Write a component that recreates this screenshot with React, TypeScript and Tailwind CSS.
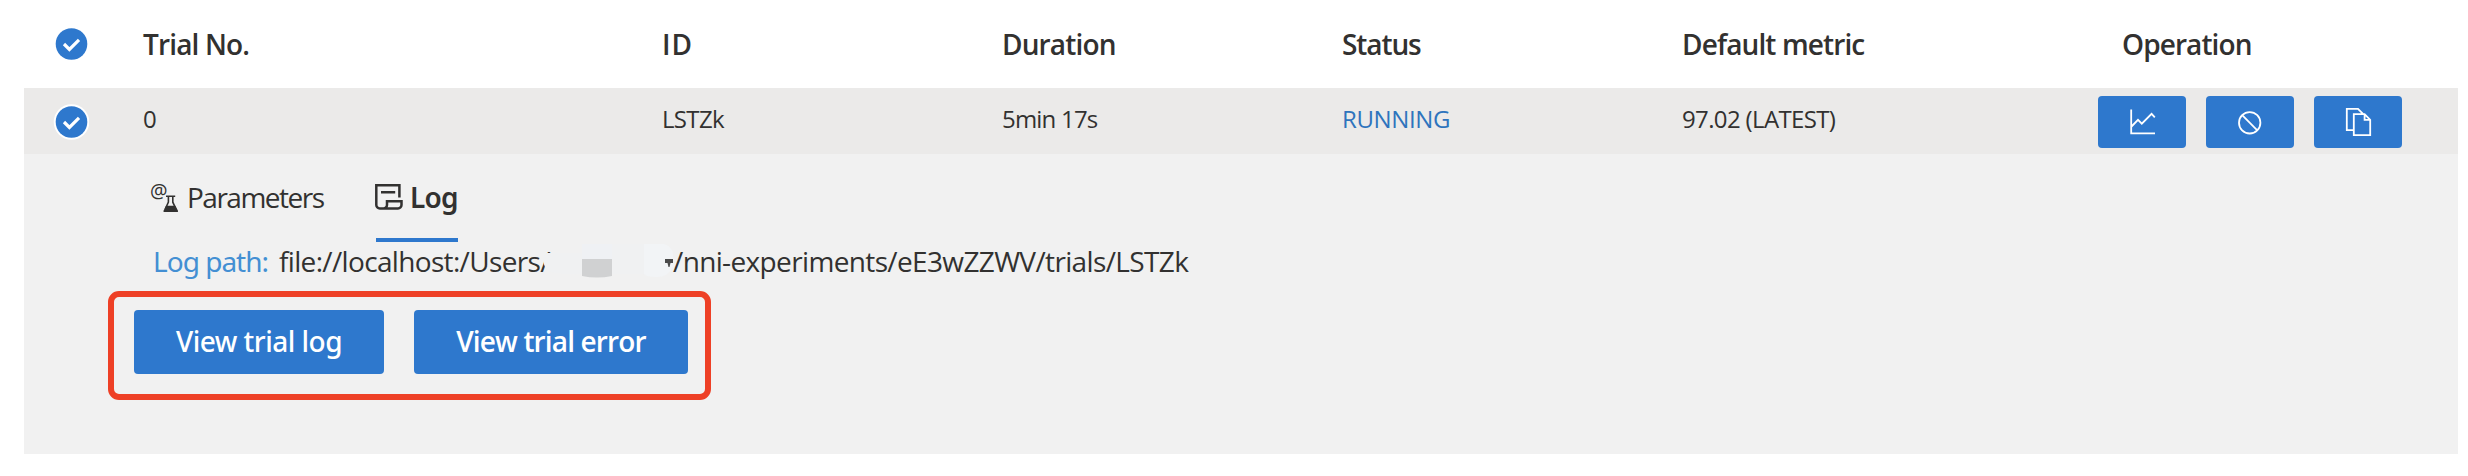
import React from 'react';

const COLS = 'grid grid-cols-[119px_518px_341px_340px_340px_416px_1fr] items-center';

function Check({ ring = false }: { ring?: boolean }) {
  return (
    <svg className="ml-[29px] block h-9 w-9" viewBox="0 0 36 36" fill="none">
      {ring && <circle cx="18.5" cy="18" r="17.8" fill="#fff" />}
      <circle cx="18.5" cy="18" r="15.8" fill="#2e78cd" />
      <path d="M11 18l5.4 5.4L26 13.8" stroke="#fff" strokeWidth="3.2" />
    </svg>
  );
}

function ActionButton({ children }: { children: React.ReactNode }) {
  return (
    <button className="h-[52px] w-[88px] rounded bg-[#2e78cd]">
      <svg className="block h-[52px] w-[88px]" viewBox="0 0 88 52" fill="none" stroke="#fff" strokeWidth="1.8">
        {children}
      </svg>
    </button>
  );
}

export default function App() {
  return (
    <div className="h-[476px] w-full overflow-hidden bg-white pr-[10px] pl-6 font-['Open_Sans',sans-serif] text-[#323130]">
      <div className={`${COLS} h-[88px] text-[28px] font-[560] whitespace-nowrap`}>
        <Check />
        <div className="pb-px tracking-[-0.85px]">Trial No.</div>
        <div className="pb-px pl-px tracking-[1px]">ID</div>
        <div className="pb-px tracking-[-0.85px]">Duration</div>
        <div className="pb-px tracking-[-1.1px]">Status</div>
        <div className="pb-px tracking-[-0.88px]">Default metric</div>
        <div className="pb-px pl-6 tracking-[-0.9px]">Operation</div>
      </div>

      <div className={`${COLS} h-[66px] bg-[#ebeae9] text-[24px] whitespace-nowrap`}>
        <div className="pt-[2px]"><Check ring /></div>
        <div className="pb-[4px]">0</div>
        <div className="pb-[4px] pl-px tracking-[-0.66px]">LSTZk</div>
        <div className="pb-[4px] tracking-[-0.8px]">5min 17s</div>
        <div className="pb-[4px] tracking-[-0.37px] text-[#2e74bd]">RUNNING</div>
        <div className="pb-[4px] tracking-[-0.64px]">97.02 (LATEST)</div>
        <div className="flex gap-5 pt-[2px]">
          <ActionButton>
            <path d="M33.2 13.5V37.3H57M33.5 30.5l6.5-6.6 3.8 3.8 9.8-9.8 3.2 3.4" />
          </ActionButton>
          <ActionButton>
            <circle cx="43.7" cy="26.8" r="10.7" />
            <path d="M36.2 19.2l15.1 15.1" />
          </ActionButton>
          <ActionButton>
            <path d="M39.5 34.2H32.8V12.8H44l5.3 5.4M39.8 18.2H50.6l5.6 5.6V39.2H39.8zM50.6 18.2v5.6h5.6" />
          </ActionButton>
        </div>
      </div>

      <div className="h-[300px] bg-[#f1f1f1] text-[28px]">
        <div className="flex h-[88px] pl-[127px]">
          <div className="flex h-[88px] w-[225px] items-start">
            <svg className="mt-[24px] -ml-[4px] block h-[36px] w-[32px] shrink-0 overflow-visible" viewBox="-4 -6 32 36">
              <text x="-1" y="14" fontSize="19.5" fontWeight="500" fill="#323130">@</text>
              <path d="M15 12.2h9.2M17.4 12.5v5.7L14.3 25M21.8 12.5v5.7L25 25" fill="none" stroke="#323130" strokeWidth="1.6" />
              <path d="M15 21.8h9.3l2.6 4.6c.4.9 0 1.7-1 1.7H13.6c-1 0-1.4-.8-1-1.7z" fill="#323130" />
            </svg>
            <span className="mt-[23px] ml-[8px] leading-[40px] tracking-[-1.5px] whitespace-nowrap">Parameters</span>
          </div>
          <div className="flex h-[88px] w-[82px] items-start border-b-4 border-[#2e78cd]">
            <svg className="mt-[30px] -ml-px block h-[26px] w-[28px] shrink-0" viewBox="0 0 28 26" fill="none" stroke="#323130" strokeWidth="2.5">
              <path d="M24.4 13.6V1.3H1.3V21a3.5 3.5 0 0 0 3.5 3.5H23a3.5 3.5 0 0 0 3.5-3.5V17.2H12V21a3.5 3.5 0 0 1-3.5 3.5M6 8.3h14.2" />
            </svg>
            <span className="mt-[23px] ml-[7px] font-['Noto_Sans',sans-serif] leading-[40px] font-semibold tracking-[-0.8px]">Log</span>
          </div>
        </div>
        <div className="flex h-[38px] items-center pl-[129px] whitespace-nowrap">
          <span className="w-[126px] font-['Noto_Sans',sans-serif] tracking-[-0.99px] text-[#438fd3]">Log path:</span>
          <span className="w-[265px] tracking-[-0.66px]">file://localhost:/Users/</span>
          <svg className="relative block h-[34px] w-[129px] shrink-0" viewBox="0 0 129 34">
            <path d="M9 9H40V0H120q10 3 9 14v9q-5 10-17 10-9 0-13-3H42Q8 31 3 26Q-2 20 0 12L3 9Z" fill="#f0f1f2" />
            <path d="M38 0h30v15H38z" fill="#eff1f4" />
            <path d="M38 15h30v17q-15 3-30 0z" fill="#d0d1d2" />
            <path d="M100 0h20q10 3 9 14v9q-5 10-17 10-9 0-12-3z" fill="#f2f4f6" />
            <path d="M121 15h8v4h-2.500l-1 4h-1l-1-4h-2.500z" fill="#4a4a4a" />
          </svg>
          <span className="tracking-[-0.64px]">/nni-experiments/eE3wZZWV/trials/LSTZk</span>
        </div>
        <div className="mt-[11px] ml-[84px] flex h-[109px] w-[603px] gap-[30px] rounded-[11px] border-6 border-[#ee4026] pt-[13px] pl-5 font-[540] text-white">
          <button className="h-16 w-[250px] rounded bg-[#2e78cd] pb-[2px] font-['Noto_Sans',sans-serif] tracking-[-0.5px]">View trial log</button>
          <button className="h-16 w-[274px] rounded bg-[#2e78cd] pb-[2px] tracking-[-0.85px]">View trial error</button>
        </div>
      </div>
    </div>
  );
}
